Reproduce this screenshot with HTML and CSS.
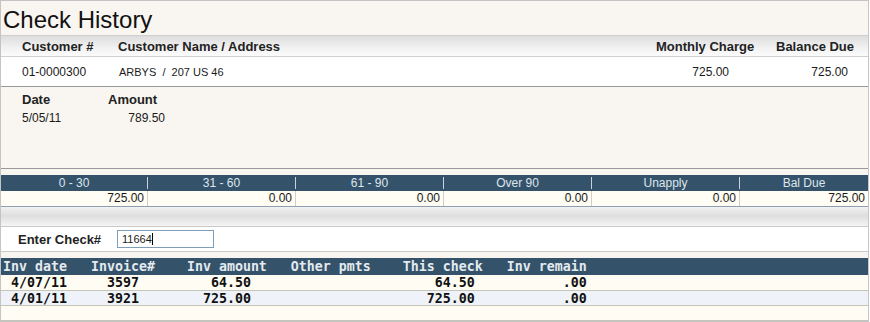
FILE: index.html
```html
<!DOCTYPE html>
<html>
<head>
    <title>Check History</title>
    <link rel="stylesheet" href="styles.css">
</head>
<body>
    <div class="page">
        <div class="title-bar">
            <h1>Check History</h1>
        </div>

        <div class="cust-grid cust-head">
            <span>Customer #</span>
            <span>Customer Name / Address</span>
            <span>Monthly Charge</span>
            <span>Balance Due</span>
        </div>
        <div class="cust-grid cust-row">
            <span class="cust-no">01-0000300</span>
            <span class="cust-name">ARBYS&nbsp; / &nbsp;207 US 46</span>
            <span class="money monthly">725.00</span>
            <span class="money balance">725.00</span>
        </div>

        <div class="payments">
            <div class="pay-grid pay-head">
                <span>Date</span>
                <span>Amount</span>
            </div>
            <div class="pay-grid pay-row">
                <span>5/05/11</span>
                <span class="money">789.50</span>
            </div>
        </div>

        <div class="spacer"></div>

        <div class="aging">
            <div class="aging-grid aging-head">
                <span>0 - 30</span>
                <span>31 - 60</span>
                <span>61 - 90</span>
                <span>Over 90</span>
                <span>Unapply</span>
                <span>Bal Due</span>
            </div>
            <div class="aging-grid aging-row">
                <span>725.00</span>
                <span>0.00</span>
                <span>0.00</span>
                <span>0.00</span>
                <span>0.00</span>
                <span>725.00</span>
            </div>
        </div>

        <div class="band"></div>

        <div class="check-entry">
            <label for="checkNo">Enter Check#</label>
            <div class="check-input" id="checkNo">11664<span class="caret"></span></div>
        </div>

        <div class="spacer"></div>

        <div class="inv-table">
            <div class="inv-head">Inv date   Invoice#    Inv amount   Other pmts    This check   Inv remain</div>
            <div class="inv-row"> 4/07/11     3597         64.50                       64.50           .00</div>
            <div class="inv-row alt"> 4/01/11     3921        725.00                      725.00           .00</div>
            <div class="inv-row"></div>
        </div>
    </div>
</body>
</html>
```

FILE: styles.css
```css
body {
    margin: 0;
    font-family: "Liberation Sans", Arial, sans-serif;
    color: #1a1a1a;
    background: #fff;
}

.page {
    width: 869px;
    border: 1px solid #c4c4c4;
    box-sizing: border-box;
}

.title-bar {
    height: 35px;
    background-color: #f9f5f0;
    border-bottom: 1px solid #cfcfcf;
    box-sizing: border-box;
}

.title-bar h1 {
    margin: 0;
    padding: 5px 0 0 2px;
    font-size: 24px;
    font-weight: normal;
    line-height: 27px;
    color: #111;
}

/* Customer block */
.cust-grid {
    display: grid;
    grid-template-columns: 21px 96px 1fr 120px 92px;
    align-items: center;
}

.cust-grid > span:first-child {
    grid-column: 2;
}

.cust-head {
    height: 21px;
    padding-top: 1px;
    box-sizing: border-box;
    background: linear-gradient(#dddddd, #f2f2f2 60%, #fbfbfb);
    border-bottom: 1px solid #d0d0d0;
    font-size: 13px;
    font-weight: bold;
    color: #222;
}

.cust-row {
    height: 30px;
    border-bottom: 1px solid #9a9a9a;
    box-sizing: border-box;
    background: #fff;
}

.cust-no {
    font-size: 12px;
}

.cust-name {
    font-size: 11px;
    padding-left: 1px;
}

.money {
    font-size: 12px;
    text-align: right;
}

.monthly {
    padding-right: 47px;
}

.balance {
    padding-right: 20px;
}

/* Payments */
.payments {
    height: 82px;
    padding-top: 6px;
    box-sizing: border-box;
    background-color: #f9f6f1;
    border-bottom: 1px solid #9a9a9a;
}

.pay-grid {
    display: grid;
    grid-template-columns: 86px 57px;
    padding-left: 21px;
    line-height: 14px;
}

.pay-head {
    font-size: 13px;
    font-weight: bold;
    color: #222;
    margin-bottom: 4px;
}

.pay-row {
    font-size: 12px;
}

.spacer {
    height: 6px;
    background-color: #f8f5f0;
}

/* Aging */
.aging-grid {
    display: grid;
    grid-template-columns: 146px 148px 148px 148px 148px 1fr;
}

.aging-head {
    height: 16px;
    align-items: center;
    background-color: #34536b;
    color: #dfe6ec;
    font-size: 12px;
}

.aging-head span {
    text-align: center;
    line-height: 12px;
}

.aging-head span + span {
    border-left: 1px solid #c9d2da;
}

.aging-row {
    height: 16px;
    background-color: #fffdf4;
    border-bottom: 1px solid #8d9db2;
    box-sizing: border-box;
    font-size: 12px;
    line-height: 15px;
}

.aging-row span {
    text-align: right;
    padding-right: 3px;
}

.aging-row span + span {
    border-left: 1px solid #cfcfc8;
}

.band {
    height: 20px;
    box-sizing: border-box;
    background: linear-gradient(#f2f2f2, #dedede 45%, #f4f4f4);
    border-bottom: 1px solid #c9c9c9;
}

/* Check entry */
.check-entry {
    height: 25px;
    box-sizing: border-box;
    display: flex;
    align-items: center;
    padding-left: 17px;
    border-bottom: 1px solid #c9c9c9;
    background: #fff;
}

.check-entry label {
    width: 99px;
    font-size: 13px;
    font-weight: bold;
    color: #222;
}

.check-input {
    width: 97px;
    height: 18px;
    box-sizing: border-box;
    border: 1px solid #7f9db9;
    padding-left: 4px;
    font-size: 11px;
    line-height: 16px;
}

.caret {
    display: inline-block;
    width: 1px;
    height: 12px;
    background: #000;
    vertical-align: -2px;
}

/* Invoice table */
.inv-table {
    font-family: "DejaVu Sans Mono", "Liberation Mono", monospace;
    font-size: 13.29px;
    font-weight: bold;
}

.inv-head,
.inv-row {
    white-space: pre;
    padding-left: 2px;
}

.inv-head {
    height: 17px;
    line-height: 17px;
    background-color: #34536b;
    color: #e4eaef;
}

.inv-row {
    height: 16px;
    line-height: 15px;
    box-sizing: border-box;
    background-color: #fffdf3;
    border-bottom: 1px solid #c6c6b8;
    color: #111;
}

.inv-row.alt {
    height: 15px;
    background-color: #eff3f9;
}

.inv-row:last-child {
    height: 15px;
}
```
